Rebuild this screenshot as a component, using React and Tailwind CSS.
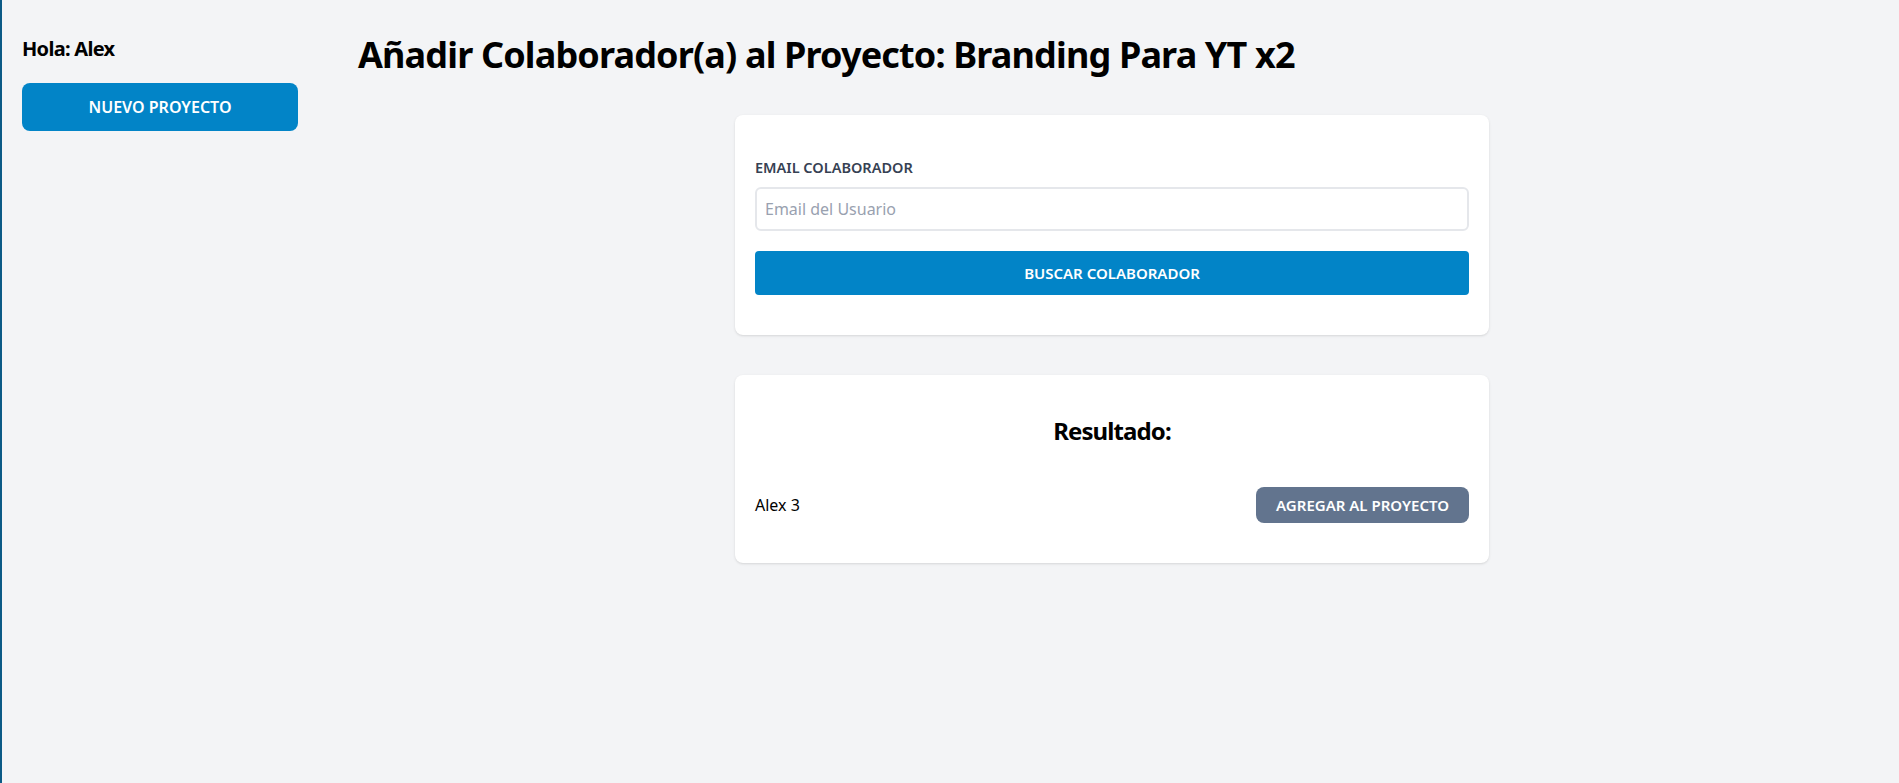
export default function App() {
  return (
    <div
      className="min-h-screen bg-gray-100 border-l-2 border-[#0b5a86] flex"
      style={{ fontFamily: '"Noto Sans", sans-serif' }}
    >
      <aside className="w-[316px] shrink-0 px-5 pt-[35px]">
        <p className="text-xl font-bold text-black tracking-[-0.7px]">Hola: Alex</p>
        <a
          href="#"
          className="bg-[#0284c7] w-full p-3 text-white uppercase font-semibold block mt-5 text-center rounded-lg"
        >
          Nuevo Proyecto
        </a>
      </aside>

      <main className="flex-1 pl-10 pr-[33px] pt-[35px] pb-10">
        <h1 className="text-4xl font-bold text-black tracking-[-0.85px]">
          Añadir Colaborador(a) al Proyecto: Branding Para YT x2
        </h1>

        <div className="mt-10 flex justify-center">
          <form className="bg-white py-10 px-5 w-1/2 rounded-lg shadow">
            <div className="mb-5">
              <label
                htmlFor="email"
                className="text-gray-700 uppercase font-semibold text-[14.5px]"
              >
                Email Colaborador
              </label>
              <input
                type="email"
                id="email"
                placeholder="Email del Usuario"
                className="border-2 border-gray-200 w-full p-2 mt-2 placeholder-gray-400 rounded-md"
              />
            </div>
            <button
              type="button"
              className="bg-[#0284c7] w-full p-3 text-white uppercase font-semibold rounded text-[15px] leading-5"
            >
              Buscar Colaborador
            </button>
          </form>
        </div>

        <div className="flex justify-center mt-10">
          <div className="bg-white py-10 px-5 w-1/2 rounded-lg shadow">
            <h2 className="text-center mb-10 text-2xl font-bold text-black tracking-[-0.9px]">
              Resultado:
            </h2>
            <div className="flex justify-between items-center">
              <p className="text-black">Alex 3</p>
              <button
                type="button"
                className="bg-slate-500 px-5 py-2 rounded-lg uppercase text-white font-semibold text-[15px] leading-5"
              >
                Agregar al Proyecto
              </button>
            </div>
          </div>
        </div>
      </main>
    </div>
  );
}
